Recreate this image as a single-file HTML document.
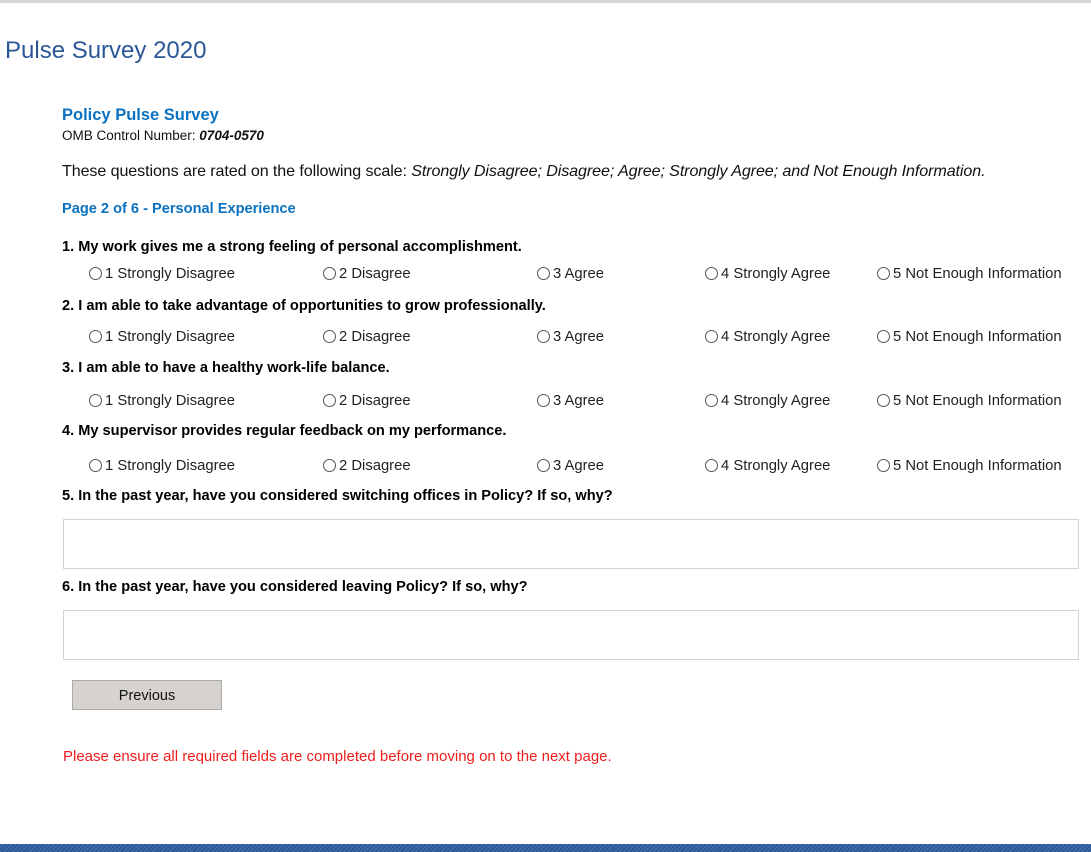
<!DOCTYPE html>
<html><head><style>
body{margin:0;width:1091px;height:852px;position:relative;background:#fff;font-family:"Liberation Sans",sans-serif;overflow:hidden}
.a{position:absolute;white-space:nowrap}
.top{left:0;top:0;width:1091px;height:3px;background:#d6d6d6}
.bot{left:0;top:844px;width:1091px;height:8px;background:repeating-linear-gradient(135deg,#2b5797 0 2px,#4a74b0 2px 3px)}
.q{font-weight:bold;font-size:14.6px;color:#000;left:62px}
.o{font-size:14.8px;color:#222}
.o:before{content:"";display:inline-block;width:11px;height:11px;border:1px solid #555;border-radius:50%;vertical-align:-2px;margin-right:3px}
.ta{left:63px;width:1014px;height:48px;border:1px solid #d4d4d4}
</style></head><body>
<div class="a top"></div>
<div class="a" style="left:5px;top:37px;font-size:24px;color:#2b5797">Pulse Survey 2020</div>
<div class="a" style="left:62px;top:106px;font-size:16.5px;font-weight:bold;color:#0a72c0">Policy Pulse Survey</div>
<div class="a" style="left:62px;top:128px;font-size:13.5px;color:#111">OMB Control Number: <b><i>0704-0570</i></b></div>
<div class="a" style="left:62px;top:162px;font-size:16.1px;color:#111;letter-spacing:-0.1px">These questions are rated on the following scale: <i>Strongly Disagree; Disagree; Agree; Strongly Agree; and Not Enough Information.</i></div>
<div class="a" style="left:62px;top:201px;font-size:14.6px;font-weight:bold;color:#0a72c0">Page 2 of 6 - Personal Experience</div>

<div class="a q" style="top:239px">1. My work gives me a strong feeling of personal accomplishment.</div>
<div class="a q" style="top:298px">2. I am able to take advantage of opportunities to grow professionally.</div>
<div class="a q" style="top:360px">3. I am able to have a healthy work-life balance.</div>
<div class="a q" style="top:423px">4. My supervisor provides regular feedback on my performance.</div>
<div class="a q" style="top:488px">5. In the past year, have you considered switching offices in Policy? If so, why?</div>
<div class="a q" style="top:579px">6. In the past year, have you considered leaving Policy? If so, why?</div>

<div class="a o" style="left:89px;top:266px">1 Strongly Disagree</div><div class="a o" style="left:323px;top:266px">2 Disagree</div><div class="a o" style="left:537px;top:266px">3 Agree</div><div class="a o" style="left:705px;top:266px">4 Strongly Agree</div><div class="a o" style="left:877px;top:266px">5 Not Enough Information</div>
<div class="a o" style="left:89px;top:329px">1 Strongly Disagree</div><div class="a o" style="left:323px;top:329px">2 Disagree</div><div class="a o" style="left:537px;top:329px">3 Agree</div><div class="a o" style="left:705px;top:329px">4 Strongly Agree</div><div class="a o" style="left:877px;top:329px">5 Not Enough Information</div>
<div class="a o" style="left:89px;top:393px">1 Strongly Disagree</div><div class="a o" style="left:323px;top:393px">2 Disagree</div><div class="a o" style="left:537px;top:393px">3 Agree</div><div class="a o" style="left:705px;top:393px">4 Strongly Agree</div><div class="a o" style="left:877px;top:393px">5 Not Enough Information</div>
<div class="a o" style="left:89px;top:458px">1 Strongly Disagree</div><div class="a o" style="left:323px;top:458px">2 Disagree</div><div class="a o" style="left:537px;top:458px">3 Agree</div><div class="a o" style="left:705px;top:458px">4 Strongly Agree</div><div class="a o" style="left:877px;top:458px">5 Not Enough Information</div>

<div class="a ta" style="top:519px"></div>
<div class="a ta" style="top:610px"></div>
<div class="a" style="left:72px;top:680px;width:148px;height:28px;background:#d6d3ce;border:1px solid #aaa;font-size:14.5px;text-align:center;line-height:31px;color:#111">Previous</div>
<div class="a" style="left:63px;top:748px;font-size:15px;color:#f01c1c">Please ensure all required fields are completed before moving on to the next page.</div>
<div class="a bot"></div>
</body></html>
